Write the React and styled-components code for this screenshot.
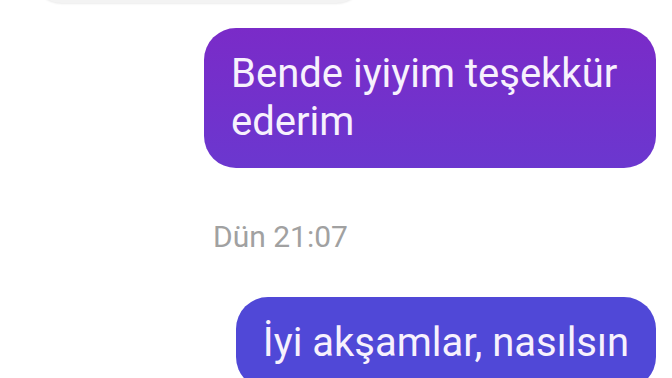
import React from "react";
import styled, { createGlobalStyle } from "styled-components";

const GlobalStyle = createGlobalStyle`
  html, body {
    margin: 0;
    padding: 0;
    background: #ffffff;
    overflow: hidden;
  }
  body {
    font-family: Roboto, "Noto Sans", sans-serif;
  }
`;

const Thread = styled.div`
  width: 672px;
  height: 378px;
  overflow: hidden;
  display: flex;
  flex-direction: column;
  padding-right: 16px;
  box-sizing: border-box;
`;

const Row = styled.div`
  display: flex;
  justify-content: ${(p) => (p.mine ? "flex-end" : "flex-start")};
  margin-top: ${(p) => p.gap || 0}px;
`;

const Incoming = styled.div`
  width: 334px;
  height: 60px;
  margin-top: -57px;
  margin-left: 32px;
  background: #f3f3f3;
  border-radius: 30px;
  box-shadow: 0 1px 2px rgba(0, 0, 0, 0.08);
`;

const Bubble = styled.div`
  max-width: ${(p) => p.max || 460}px;
  padding: 22px 27px;
  border-radius: 32px;
  background: ${(p) => p.bg};
  color: #f7f1fd;
  font-size: 40px;
  line-height: 48px;
  box-sizing: border-box;
`;

const Stamp = styled.div`
  margin: 51px 0 0 213px;
  color: #a1a1a1;
  font-size: 30px;
  line-height: 36px;
`;

export default function App() {
  return (
    <>
      <GlobalStyle />
      <Thread>
        <Row>
          <Incoming />
        </Row>
        <Row mine gap={25}>
          <Bubble max={452} bg="linear-gradient(180deg, #7a2bc8 0%, #6b37cf 100%)">
            Bende iyiyim teşekkür ederim
          </Bubble>
        </Row>
        <Stamp>Dün 21:07</Stamp>
        <Row mine gap={42}>
          <Bubble bg="#5048d7">İyi akşamlar, nasılsın</Bubble>
        </Row>
      </Thread>
    </>
  );
}
